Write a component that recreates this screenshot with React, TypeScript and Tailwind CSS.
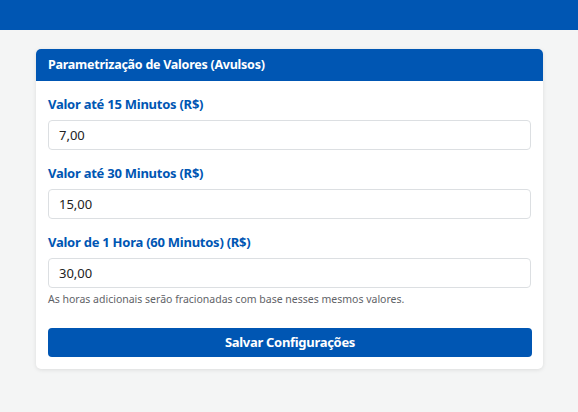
import { useState } from 'react';

const fields = [
  { key: 'v15', label: 'Valor até 15 Minutos (R$)', value: '7,00' },
  { key: 'v30', label: 'Valor até 30 Minutos (R$)', value: '15,00' },
  { key: 'v60', label: 'Valor de 1 Hora (60 Minutos) (R$)', value: '30,00' },
];

export default function App() {
  const [values, setValues] = useState<Record<string, string>>(
    Object.fromEntries(fields.map((f) => [f.key, f.value])),
  );

  return (
    <div className="min-h-screen bg-[#f4f5f5] font-['Noto_Sans',sans-serif]">
      <div className="h-[30px] bg-[#0056b3]" />

      <div className="px-[36px] pt-[19px]">
        <div className="w-[507px] bg-white rounded-[5px] shadow-[0_1px_4px_rgba(0,0,0,0.1)] overflow-hidden">
          <div className="h-[32px] bg-[#0056b3] px-[12px] flex items-center">
            <h2 className="text-[12.5px] font-bold text-white tracking-[-0.25px]">
              Parametrização de Valores (Avulsos)
            </h2>
          </div>

          <div className="px-[12px] pt-[13px] pb-[12px]">
            {fields.map((f, i) => (
              <div key={f.key} className={i > 0 ? 'mt-[13px]' : ''}>
                <label className="block text-[13px] font-bold text-[#0056b3] leading-[20px] mb-[6px] tracking-[-0.25px]">
                  {f.label}
                </label>
                <input
                  type="text"
                  value={values[f.key]}
                  onChange={(e) => setValues({ ...values, [f.key]: e.target.value })}
                  className="w-[483px] h-[30px] border border-[#dcdfe2] rounded-[4px] px-[10px] text-[13px] text-[#222] focus:outline-none"
                />
              </div>
            ))}
            <p className="mt-[4px] text-[10.5px] text-[#5f6368] leading-[15px]">
              As horas adicionais serão fracionadas com base nesses mesmos valores.
            </p>

            <button className="mt-[21px] w-[484px] h-[29px] bg-[#0056b3] rounded-[4px] text-white text-[13px] font-bold tracking-[-0.3px]">
              Salvar Configurações
            </button>
          </div>
        </div>
      </div>
    </div>
  );
}
